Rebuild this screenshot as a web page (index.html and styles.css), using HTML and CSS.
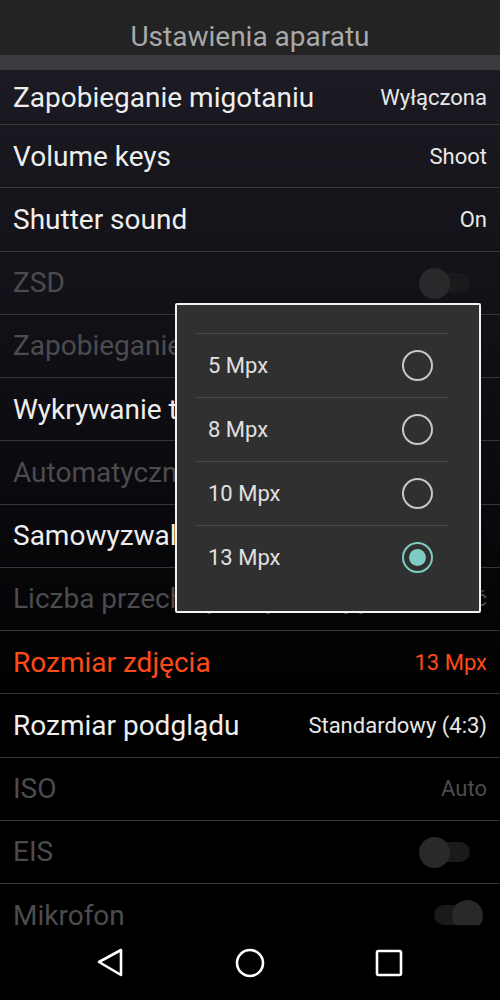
FILE: index.html
```html
<!DOCTYPE html>
<html lang="pl">

<head>
  <meta charset="UTF-8" />
  <meta name="viewport" content="width=device-width, initial-scale=1.0" />
  <title>Ustawienia aparatu</title>
  <link rel="stylesheet" href="styles.css">
</head>

<body>
  <header class="title-bar">Ustawienia aparatu</header>
  <div class="band"></div>

  <div class="list">
    <div class="row first">
      <span class="label">Zapobieganie migotaniu</span>
      <span class="value">Wyłączona</span>
    </div>
    <div class="row">
      <span class="label">Volume keys</span>
      <span class="value">Shoot</span>
    </div>
    <div class="row">
      <span class="label">Shutter sound</span>
      <span class="value">On</span>
    </div>
    <div class="row disabled">
      <span class="label">ZSD</span>
      <span class="switch"><span class="thumb"></span></span>
    </div>
    <div class="row disabled">
      <span class="label">Zapobieganie drganiom</span>
    </div>
    <div class="row">
      <span class="label">Wykrywanie twarzy</span>
    </div>
    <div class="row disabled">
      <span class="label">Automatyczne wykrywanie scen</span>
    </div>
    <div class="row">
      <span class="label">Samowyzwalacz</span>
    </div>
    <div class="row disabled">
      <span class="label">Liczba przechwyconych zdjęć</span>
      <span class="value">99 zdjęć</span>
    </div>
    <div class="row active">
      <span class="label">Rozmiar zdjęcia</span>
      <span class="value">13 Mpx</span>
    </div>
    <div class="row">
      <span class="label">Rozmiar podglądu</span>
      <span class="value">Standardowy (4:3)</span>
    </div>
    <div class="row disabled">
      <span class="label">ISO</span>
      <span class="value">Auto</span>
    </div>
    <div class="row disabled">
      <span class="label">EIS</span>
      <span class="switch"><span class="thumb"></span></span>
    </div>
    <div class="row disabled">
      <span class="label">Mikrofon</span>
      <span class="switch on"><span class="thumb"></span></span>
    </div>

    <div class="dialog">
      <div class="option">
        <span>5 Mpx</span>
        <span class="radio"></span>
      </div>
      <div class="option">
        <span>8 Mpx</span>
        <span class="radio"></span>
      </div>
      <div class="option">
        <span>10 Mpx</span>
        <span class="radio"></span>
      </div>
      <div class="option">
        <span>13 Mpx</span>
        <span class="radio checked"></span>
      </div>
    </div>
  </div>

  <nav class="nav-bar">
    <svg width="30" height="32" viewBox="0 0 30 32">
      <path d="M3 15 L25 3 L25 28 Z" fill="none" stroke="#fff" stroke-width="2.6" stroke-linejoin="round" />
    </svg>
    <svg width="32" height="32" viewBox="0 0 32 32">
      <circle cx="16" cy="16" r="13" fill="none" stroke="#fff" stroke-width="2.6" />
    </svg>
    <svg width="30" height="30" viewBox="0 0 30 30">
      <rect x="3" y="3" width="24" height="24" rx="1.5" fill="none" stroke="#fff" stroke-width="2.6" />
    </svg>
  </nav>
</body>

</html>
```

FILE: styles.css
```css
body {
  margin: 0;
  width: 500px;
  height: 1000px;
  overflow: hidden;
  background: #000;
  font-family: Roboto, 'Noto Sans', sans-serif;
  color: #eee;
}

.title-bar {
  height: 55px;
  box-sizing: border-box;
  padding-top: 20px;
  background: #232323;
  color: #a9a9a9;
  font-size: 28px;
  line-height: 34px;
  text-align: center;
}

.band {
  height: 15px;
  background: #3b3a41;
}

.list {
  position: relative;
  height: 855px;
  overflow: hidden;
  background: linear-gradient(to bottom, #1c1a22 0%, #0c0b10 45%, #000 75%);
}

.row {
  height: 62.25px;
  display: flex;
  align-items: center;
  justify-content: space-between;
  padding: 0 13px;
  border-bottom: 1px solid #37363b;
  white-space: nowrap;
  overflow: hidden;
}

.row.first {
  height: 54px;
}

.label {
  font-size: 28px;
  color: #eeeeee;
}

.value {
  font-size: 22px;
  color: #e8e8e8;
}

.row.disabled .label,
.row.disabled .value {
  color: #4c4c4e;
}

.row.active .label,
.row.active .value {
  color: #ff4a17;
}

.switch {
  position: relative;
  flex: none;
  width: 36px;
  height: 20px;
  margin-right: 17px;
  border-radius: 10px;
  background: #1a1a1c;
}

.switch .thumb {
  position: absolute;
  top: -5px;
  left: -15px;
  width: 31px;
  height: 31px;
  border-radius: 50%;
  background: #29292b;
}

.switch.on .thumb {
  left: 18px;
}

.dialog {
  position: absolute;
  left: 175px;
  top: 233px;
  width: 253px;
  padding: 28px 31px 22px 18px;
  background: #303030;
  border: 2px solid #f2f2f2;
  border-radius: 2px;
}

.option {
  height: 64px;
  box-sizing: border-box;
  display: flex;
  align-items: center;
  justify-content: space-between;
  padding: 0 15px 0 13px;
  border-top: 1px solid #474747;
  font-size: 22px;
  color: #e0e0e0;
}

.radio {
  width: 27px;
  height: 27px;
  border: 2.5px solid #c8c8c8;
  border-radius: 50%;
  display: flex;
  align-items: center;
  justify-content: center;
}

.radio.checked {
  border-color: #7ecdc4;
}

.radio.checked::after {
  content: "";
  width: 17px;
  height: 17px;
  border-radius: 50%;
  background: #7ecdc4;
}

.nav-bar {
  height: 75px;
  display: flex;
  align-items: center;
  gap: 108px;
  padding-left: 96px;
  background: #000;
}
```
